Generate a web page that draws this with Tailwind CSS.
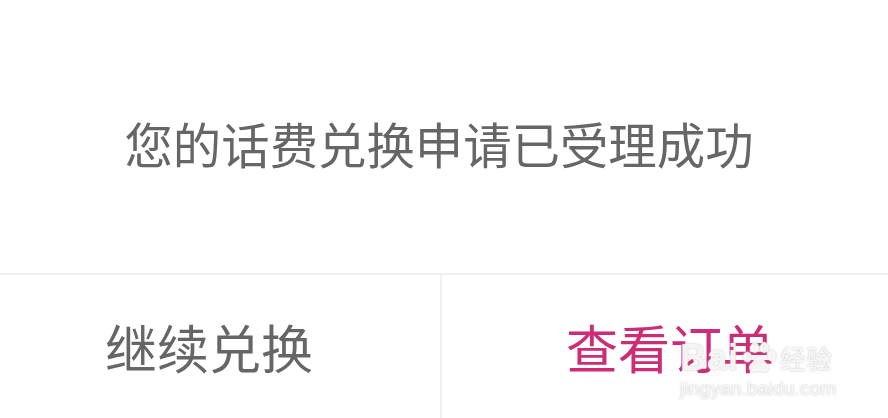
<!DOCTYPE html>
<html lang="zh">
<head>
    <meta charset="UTF-8">
    <title>兑换</title>
    <script src="https://cdn.jsdelivr.net/npm/@tailwindcss/browser@4"></script>
</head>
<body class="bg-white overflow-hidden font-['Noto_Sans_CJK_SC',sans-serif]">
    <div class="relative w-[888px] h-[418px] overflow-hidden">
        <div class="h-[273px] flex items-center justify-center pt-[14px] pr-[10px] text-[48.4px] text-[#666666]">您的话费兑换申请已受理成功</div>
        <div class="h-[145px] flex border-t-2 border-[#f0f0f0]">
            <div class="w-[442px] flex items-center justify-center pr-[22px] text-[52px] text-[#666666] border-r-2 border-[#f0f0f0]">继续兑换</div>
            <div class="flex-1 flex items-center justify-center pl-[10px] text-[52px] text-[#cd2c76]">查看订单</div>
        </div>
        <!-- watermark -->
        <div class="absolute left-[680px] top-[340px] w-[160px] text-white/85 font-['Liberation_Sans',sans-serif] [text-shadow:0_0_2px_#b5b5b5]">
            <div class="flex items-center h-[36px]">
                <span class="text-[36px] font-bold leading-none tracking-[1px]">Bai</span>
                <svg class="w-[36px] h-[36px] ml-[2px] [filter:drop-shadow(0_0_1px_#b5b5b5)]" viewBox="0 0 34 34" fill="currentColor">
                    <ellipse cx="6" cy="16" rx="4" ry="5"/>
                    <ellipse cx="13" cy="7" rx="4" ry="5"/>
                    <ellipse cx="22" cy="7" rx="4" ry="5"/>
                    <ellipse cx="29" cy="15" rx="4" ry="5"/>
                    <path d="M17 16c-4 0-5 4-8 7-3 3-1 8 4 7 3-1 5-1 8 0 5 1 7-4 4-7-3-3-4-7-8-7z"/>
                </svg>
                <span class="text-[26px] leading-none ml-[3px] font-['Noto_Sans_CJK_SC',sans-serif]">经验</span>
            </div>
            <div class="text-[19px] leading-none mt-[3px] tracking-[0.2px] whitespace-nowrap">jingyan.baidu.com</div>
        </div>
    </div>
</body>
</html>
